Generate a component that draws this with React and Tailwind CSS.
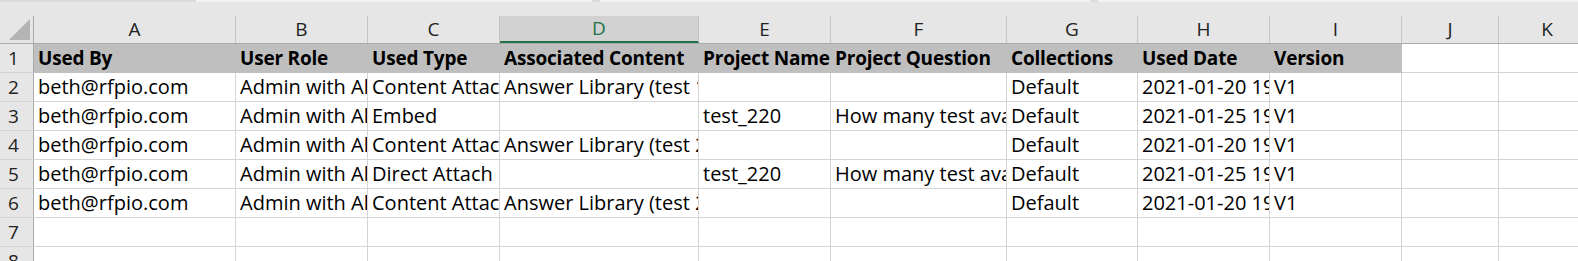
const cols = [
  { key: "A", w: "w-[202px]" },
  { key: "B", w: "w-[132px]" },
  { key: "C", w: "w-[132px]" },
  { key: "D", w: "w-[199px]" },
  { key: "E", w: "w-[132px]" },
  { key: "F", w: "w-[176px]" },
  { key: "G", w: "w-[131px]" },
  { key: "H", w: "w-[132px]" },
  { key: "I", w: "w-[132px]" },
  { key: "J", w: "w-[97px]" },
  { key: "K", w: "w-[97px]" },
];

const header = [
  "Used By",
  "User Role",
  "Used Type",
  "Associated Content",
  "Project Name",
  "Project Question",
  "Collections",
  "Used Date",
  "Version",
];

const rows = [
  ["beth@rfpio.com", "Admin with All Access", "Content Attachment", "Answer Library (test 1)", "", "", "Default", "2021-01-20 19:42:10", "V1"],
  ["beth@rfpio.com", "Admin with All Access", "Embed", "", "test_220", "How many test available?", "Default", "2021-01-25 19:10:33", "V1"],
  ["beth@rfpio.com", "Admin with All Access", "Content Attachment", "Answer Library (test 2)", "", "", "Default", "2021-01-20 19:44:51", "V1"],
  ["beth@rfpio.com", "Admin with All Access", "Direct Attach", "", "test_220", "How many test available?", "Default", "2021-01-25 19:12:07", "V1"],
  ["beth@rfpio.com", "Admin with All Access", "Content Attachment", "Answer Library (test 2)", "", "", "Default", "2021-01-20 19:46:22", "V1"],
  [],
  [],
];

function RowHead({ n }) {
  return (
    <div className="w-[34px] h-[29px] shrink-0 bg-[#e6e6e6] border-r border-b border-r-[#ababab] border-b-[#d4d4d4] flex items-center justify-center pr-[6px] text-[19px] text-[#222]">
      {n}
    </div>
  );
}

export default function App() {
  return (
    <div className="w-[1578px] h-[261px] overflow-hidden bg-white font-['Open_Sans',sans-serif] text-black">
      {/* ribbon remnant */}
      <div className="h-[16px] bg-[#e6e6e6] flex">
        <div className="w-[196px] h-[2px] bg-[#dcdcdc]" />
        <div className="w-[396px] h-[2px] bg-[#f3f3f3]" />
        <div className="w-[8px] h-[2px] bg-[#dcdcdc]" />
        <div className="w-[490px] h-[2px] bg-[#f3f3f3]" />
        <div className="w-[8px] h-[2px] bg-[#dcdcdc]" />
        <div className="flex-1 h-[2px] bg-[#f3f3f3]" />
      </div>

      {/* column letters */}
      <div className="flex h-[28px] bg-[#e6e6e6] border-b border-[#ababab]">
        <div className="w-[34px] shrink-0 relative border-r border-[#ababab]">
          <svg className="absolute right-[3px] bottom-[3px]" width="21" height="21" viewBox="0 0 21 21">
            <polygon points="21,0 21,21 0,21" fill="#b4b4b4" />
          </svg>
        </div>
        {cols.map((c) =>
          c.key === "D" ? (
            <div
              key={c.key}
              className={`${c.w} shrink-0 bg-[#d2d2d2] border-r border-[#c6c6c6] border-b-2 border-b-[#217346] flex items-center justify-center text-[19px] text-[#217346]`}
            >
              {c.key}
            </div>
          ) : (
            <div
              key={c.key}
              className={`${c.w} shrink-0 border-r border-[#c6c6c6] flex items-center justify-center text-[19px] text-[#222]`}
            >
              {c.key}
            </div>
          )
        )}
      </div>

      {/* row 1 */}
      <div className="flex">
        <RowHead n={1} />
        {cols.map((c, i) => (
          <div
            key={c.key}
            className={`${c.w} shrink-0 h-[29px] border-b border-r ${
              i < 9 ? "bg-[#bfbfbf] border-[#bfbfbf]" : "bg-white border-[#d4d4d4]"
            } px-[4px] flex items-center overflow-hidden whitespace-nowrap text-[19px] font-bold tracking-[-0.2px]`}
          >
            {header[i] || ""}
          </div>
        ))}
      </div>

      {rows.map((r, ri) => (
        <div key={ri} className="flex">
          <RowHead n={ri + 2} />
          {cols.map((c, i) => (
            <div
              key={c.key}
              className={`${c.w} shrink-0 h-[29px] border-b border-r border-[#d4d4d4] px-[4px] flex items-center overflow-hidden whitespace-nowrap text-[20px]`}
            >
              {r[i] || ""}
            </div>
          ))}
        </div>
      ))}
    </div>
  );
}
